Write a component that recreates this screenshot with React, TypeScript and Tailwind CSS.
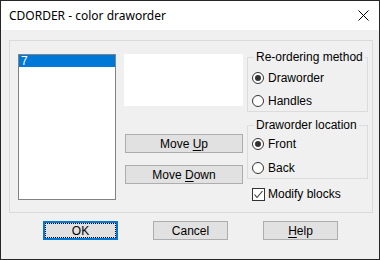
import React from "react";

const dlg = { fontFamily: '"Liberation Sans", Arial, sans-serif' };

function Radio({ checked, label }: { checked: boolean; label: string }) {
  return (
    <div className="h-[16px] flex items-center pl-[4px]">
      <svg width="12" height="12" viewBox="0 0 12 12" className="shrink-0">
        <circle cx="6" cy="6" r="5.5" fill="#ffffff" stroke="#333333" strokeWidth="1" />
        {checked && <circle cx="6" cy="6" r="3" fill="#333333" />}
      </svg>
      <span className="ml-[4px] text-[12px] leading-[16px] text-black">{label}</span>
    </div>
  );
}

function Btn({ children, focused }: { children: React.ReactNode; focused?: boolean }) {
  if (focused) {
    return (
      <div className="w-[75px] h-[19px] border-2 border-[#0078d7] bg-[#e1e1e1] flex">
        <div className="flex-1 border border-dotted border-black flex items-center justify-center text-[12px] leading-[14px] text-black">
          {children}
        </div>
      </div>
    );
  }
  return (
    <div className="w-[75px] h-[19px] border border-[#adadad] bg-[#e1e1e1] flex items-center justify-center text-[12px] leading-[14px] text-black">
      {children}
    </div>
  );
}

export default function App() {
  return (
    <div className="w-[380px] h-[260px] border border-[#262626] bg-[#f0f0f0] flex flex-col overflow-hidden" style={dlg}>
      <div className="h-[29px] bg-white flex items-center justify-between pl-[8px] pr-[10px] shrink-0">
        <span className="text-[12px] text-black" style={{ fontFamily: '"Noto Sans", "Open Sans", sans-serif' }}>
          CDORDER - color draworder
        </span>
        <svg width="11" height="11" viewBox="0 0 11 11">
          <path d="M0.5 0.5 L10.5 10.5 M10.5 0.5 L0.5 10.5" stroke="#000" strokeWidth="1" />
        </svg>
      </div>
      <div className="flex-1 flex flex-col pl-[8px] pr-[6px] pt-[10px]">
        <div className="h-[173px] border border-[#dadada] flex items-start pl-[8px] pt-[13px]">
          <div className="w-[98px] h-[146px] border border-[#828282] bg-white shrink-0">
            <div className="h-[12px] bg-[#0078d7] text-white text-[12px] leading-[12px] pl-[2px]">7</div>
          </div>
          <div className="ml-[8px] w-[119px] flex flex-col shrink-0">
            <div className="h-[52px] bg-white" />
            <div className="mt-[28px] ml-[1px] w-[118px] h-[19px] border border-[#adadad] bg-[#e1e1e1] flex items-center justify-center text-[12px] leading-[14px] text-black">
              <span>Move <u className="underline-offset-2">U</u>p</span>
            </div>
            <div className="mt-[12px] ml-[1px] w-[118px] h-[19px] border border-[#adadad] bg-[#e1e1e1] flex items-center justify-center text-[12px] leading-[14px] text-black">
              <span>Move <u className="underline-offset-2">D</u>own</span>
            </div>
          </div>
          <div className="ml-[4px] w-[121px] -mt-[4px] flex flex-col shrink-0">
            <fieldset className="min-w-0 border border-[#dcdcdc] pb-[2px]">
              <legend className="ml-[6px] px-[2px] text-[12px] leading-[14px] text-black whitespace-nowrap">Re-ordering method</legend>
              <div className="flex flex-col gap-[7px] pt-[6px]">
                <Radio checked label="Draworder" />
                <Radio checked={false} label="Handles" />
              </div>
            </fieldset>
            <fieldset className="min-w-0 mt-[6px] border border-[#dcdcdc] pb-[2px]">
              <legend className="ml-[6px] px-[2px] text-[12px] leading-[14px] text-black whitespace-nowrap">Draworder location</legend>
              <div className="flex flex-col gap-[8px] pt-[4px]">
                <Radio checked label="Front" />
                <Radio checked={false} label="Back" />
              </div>
            </fieldset>
            <div className="mt-[7px] h-[16px] flex items-center pl-[5px]">
              <svg width="13" height="13" viewBox="0 0 13 13" className="shrink-0">
                <rect x="0.5" y="0.5" width="12" height="12" fill="#ffffff" stroke="#333333" />
                <path d="M2.5 6.5 L5 9.5 L10.5 3" fill="none" stroke="#333333" strokeWidth="1.1" />
              </svg>
              <span className="ml-[3px] text-[12px] leading-[16px] text-black">Modify blocks</span>
            </div>
          </div>
        </div>
        <div className="mt-[8px] ml-[34px] flex gap-[35px]">
          <Btn focused>OK</Btn>
          <Btn>Cancel</Btn>
          <Btn><span><u className="underline-offset-2">H</u>elp</span></Btn>
        </div>
      </div>
    </div>
  );
}
